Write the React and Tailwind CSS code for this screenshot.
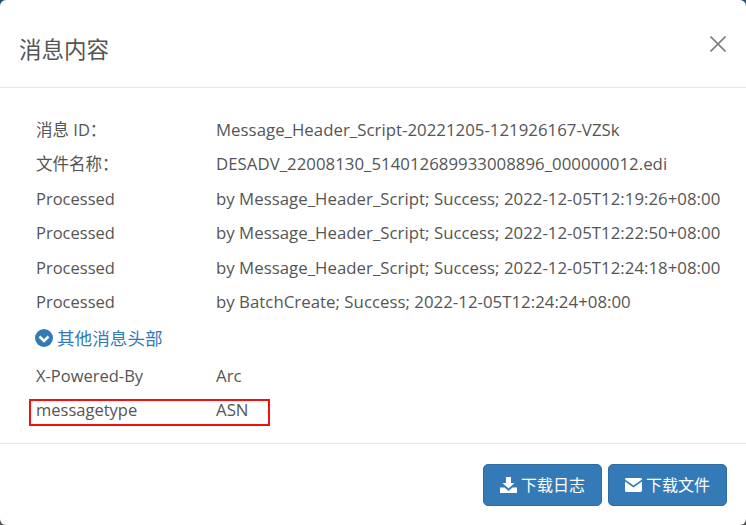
import React from 'react';

const rows = [
  ['消息 ID：', 'Message_Header_Script-20221205-121926167-VZSk'],
  ['文件名称：', 'DESADV_22008130_514012689933008896_000000012.edi'],
  ['Processed', 'by Message_Header_Script; Success; 2022-12-05T12:19:26+08:00'],
  ['Processed', 'by Message_Header_Script; Success; 2022-12-05T12:22:50+08:00'],
  ['Processed', 'by Message_Header_Script; Success; 2022-12-05T12:24:18+08:00'],
  ['Processed', 'by BatchCreate; Success; 2022-12-05T12:24:24+08:00'],
];

const Row = ({ label, value }) => (
  <div className="flex h-[34.4px] items-baseline pt-[4px] leading-[26px]">
    <div className="w-[180px] shrink-0 text-[16.5px]">{label}</div>
    <div className="whitespace-nowrap text-[16.8px] tracking-[0.03px]">{value}</div>
  </div>
);

const DownloadIcon = () => (
  <svg viewBox="0 0 17 16" className="h-[16px] w-[17px] fill-white">
    <path d="M6 0h5v6h3.500L8.500 11.500 2.500 6H6z" />
    <path d="M0 10.500h4.500l4 3.500 4-3.500H17V16H0z" />
  </svg>
);

const MailIcon = () => (
  <svg viewBox="0 0 17 14" className="h-[14px] w-[17px] fill-white">
    <path d="M1.500 0h14c.8 0 1.500.6 1.500 1.400L8.500 7.500 0 1.400C0 .6.700 0 1.500 0z" />
    <path d="M0 3.400 8.500 9.500 17 3.400V12.500c0 .8-.7 1.500-1.500 1.500h-14C.7 14 0 13.300 0 12.500z" />
  </svg>
);

const Button = ({ icon, children }) => (
  <button className="flex h-[42px] w-[119px] items-center justify-center gap-[4px] rounded-[5px] border border-[#2e6da4] bg-[#337ab7] text-[16px] text-white">
    {icon}
    {children}
  </button>
);

export default function App() {
  return (
    <div className="h-[525px] w-[746px] overflow-hidden bg-gradient-to-b from-[#1d4f6e] to-[#555555] font-['Open_Sans','Noto_Sans_CJK_SC',sans-serif]">
      <div className="flex h-full flex-col overflow-hidden rounded-[6px] bg-white text-[#555555]">
        <header className="flex h-[88px] shrink-0 items-start justify-between border-b border-[#e5e5e5] pl-[19px] pr-[20px]">
          <h4 className="pt-[34px] text-[22.5px] leading-[32px] text-[#555555]">消息内容</h4>
          <svg viewBox="0 0 16 16" className="mt-[36px] h-[16px] w-[16px]">
            <path d="M.5.5l15 15M15.500.5l-15 15" stroke="#808080" strokeWidth="1.700" fill="none" />
          </svg>
        </header>
        <main className="relative flex-1 pl-[36px] pt-[25px]">
          {rows.map(([label, value], i) => (
            <Row key={i} label={label} value={value} />
          ))}
          <div className="-ml-px flex h-[39.4px] items-center gap-[4px] pb-[2px] text-[#337ab7]">
            <svg viewBox="0 0 18 18" className="h-[18px] w-[18px]">
              <circle cx="9" cy="9" r="9" fill="#337ab7" />
              <path d="M4.500 7.500 9 12l4.500-4.500" fill="none" stroke="#ffffff" strokeWidth="2.500" />
            </svg>
            <span className="text-[17.6px]">其他消息头部</span>
          </div>
          <Row label="X-Powered-By" value="Arc" />
          <Row label="messagetype" value="ASN" />
          <div className="absolute left-[29px] top-[311px] h-[27px] w-[241px] border-2 border-[#f60f0f]" />
        </main>
        <footer className="flex h-[82px] shrink-0 items-start justify-end gap-[6px] border-t border-[#e5e5e5] pr-[19px] pt-[20px]">
          <Button icon={<DownloadIcon />}>下载日志</Button>
          <Button icon={<MailIcon />}>下载文件</Button>
        </footer>
      </div>
    </div>
  );
}
